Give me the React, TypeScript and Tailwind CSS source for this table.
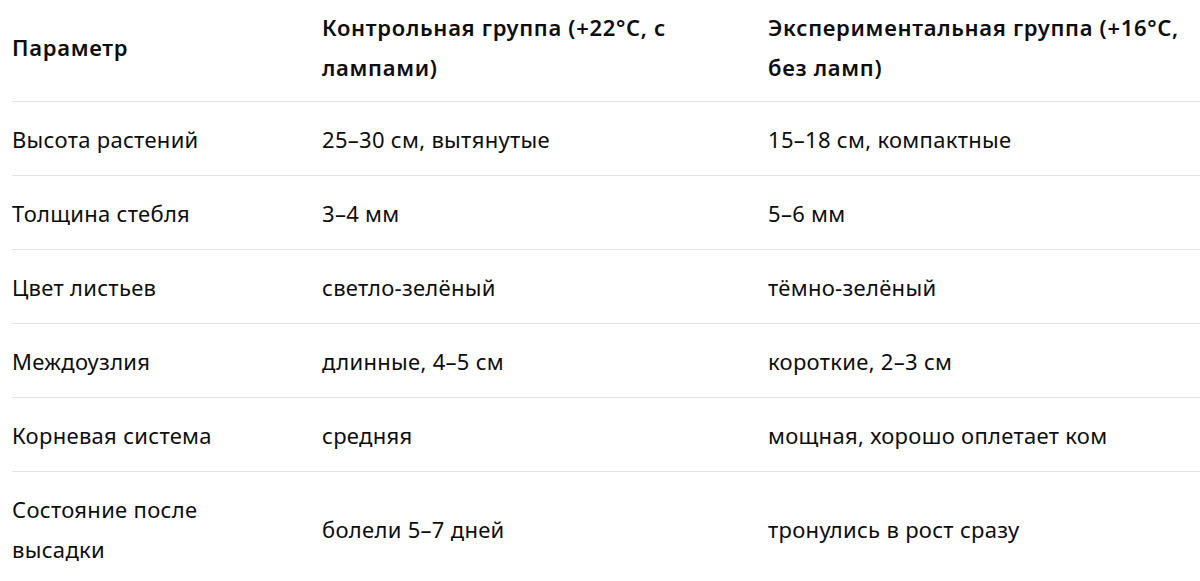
const rows: [string, string, string][] = [
  ["Высота растений", "25–30 см, вытянутые", "15–18 см, компактные"],
  ["Толщина стебля", "3–4 мм", "5–6 мм"],
  ["Цвет листьев", "светло-зелёный", "тёмно-зелёный"],
  ["Междоузлия", "длинные, 4–5 см", "короткие, 2–3 см"],
  ["Корневая система", "средняя", "мощная, хорошо оплетает ком"],
  ["Состояние после высадки", "болели 5–7 дней", "тронулись в рост сразу"],
];

export default function App() {
  return (
    <div className="h-[581px] overflow-hidden bg-white pl-3 font-['Noto_Sans',sans-serif] text-[22px] leading-[40px] text-[#0d0d0d]">
      <table className="w-full table-fixed border-collapse text-left">
        <colgroup>
          <col className="w-[310px]" />
          <col className="w-[446px]" />
          <col />
        </colgroup>
        <thead>
          <tr className="border-b border-[#e3e3e3]">
            <th className="pr-10 pt-[7px] pb-[14px] align-middle font-semibold tracking-[0.7px]">Параметр</th>
            <th className="pr-3 pt-[7px] pb-[14px] align-middle font-semibold tracking-[0.7px]">
              Контрольная группа (+22°C, с лампами)
            </th>
            <th className="pr-3 pt-[7px] pb-[14px] align-middle font-semibold tracking-[0.7px]">
              Экспериментальная группа (+16°C, без ламп)
            </th>
          </tr>
        </thead>
        <tbody>
          {rows.map((r, i) => (
            <tr key={i} className={i < rows.length - 1 ? "border-b border-[#e3e3e3]" : ""}>
              {r.map((c, j) => (
                <td
                  key={j}
                  className={`pt-[17px] pb-[16px] align-middle tracking-[0.3px] ${j === 0 ? "pr-10" : "pr-3"}`}
                >
                  {c}
                </td>
              ))}
            </tr>
          ))}
        </tbody>
      </table>
    </div>
  );
}
